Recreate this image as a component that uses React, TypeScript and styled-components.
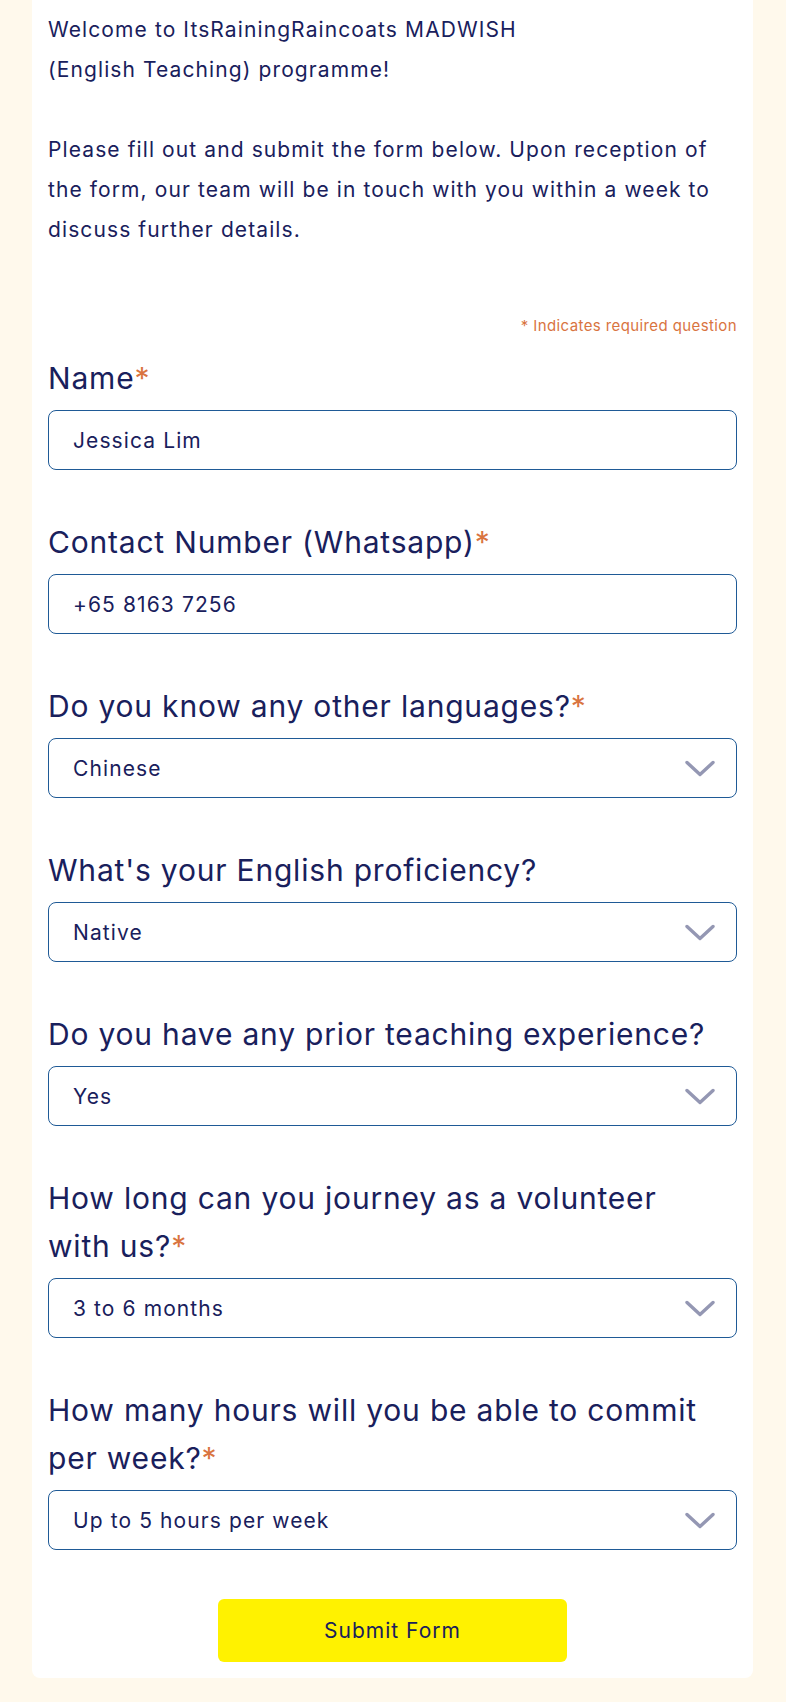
import React from "react";
import styled, { createGlobalStyle } from "styled-components";

const GlobalStyle = createGlobalStyle`
  body {
    margin: 0;
    background: #fff9ec;
    font-family: Inter, "Noto Sans", sans-serif;
    color: #19205c;
  }
`;

const Page = styled.div`
  padding: 0 33px 25px 32px;
`;

const Card = styled.form`
  background: #fff;
  border-radius: 0 0 8px 8px;
  padding: 10px 16px 16px;
  display: flex;
  flex-direction: column;
`;

const Intro = styled.p`
  margin: 0;
  font-size: 21px;
  letter-spacing: 1.1px;
  line-height: 40px;
`;

const RequiredNote = styled.div`
  margin-top: 66px;
  text-align: right;
  font-size: 15px;
  letter-spacing: 0.4px;
  line-height: 20px;
  color: #d9743f;
`;

const Field = styled.div<{ $first?: boolean }>`
  display: flex;
  flex-direction: column;
  gap: 8px;
  margin-top: ${(p) => (p.$first ? "18px" : "48px")};
`;

const Label = styled.label`
  font-size: 30px;
  letter-spacing: 0.8px;
  line-height: 48px;
  padding-right: 24px;
`;

const Star = styled.span`
  color: #d9743f;
`;

const Box = styled.div`
  box-sizing: border-box;
  height: 60px;
  border: 1px solid #1f5a96;
  border-radius: 8px;
  display: flex;
  align-items: center;
  justify-content: space-between;
  padding: 0 21px 0 24px;
  font-size: 21px;
  letter-spacing: 1.1px;
`;

const Chevron = styled.svg`
  width: 30px;
  height: 17px;
  color: #9497b3;
`;

const Submit = styled.button`
  align-self: center;
  margin-top: 49px;
  width: 349px;
  height: 63px;
  border: none;
  border-radius: 6px;
  background: #fff200;
  color: #19205c;
  font-family: inherit;
  font-size: 21px;
  letter-spacing: 1px;
`;

type Q = { label: string; value: string; required?: boolean; select?: boolean };

const questions: Q[] = [
  { label: "Name", value: "Jessica Lim", required: true },
  { label: "Contact Number (Whatsapp)", value: "+65 8163 7256", required: true },
  { label: "Do you know any other languages?", value: "Chinese", required: true, select: true },
  { label: "What's your English proficiency?", value: "Native", select: true },
  { label: "Do you have any prior teaching experience?", value: "Yes", select: true },
  { label: "How long can you journey as a volunteer with us?", value: "3 to 6 months", required: true, select: true },
  { label: "How many hours will you be able to commit per week?", value: "Up to 5 hours per week", required: true, select: true },
];

export default function App() {
  return (
    <>
      <GlobalStyle />
      <Page>
        <Card onSubmit={(e) => e.preventDefault()}>
          <Intro>
            Welcome to ItsRainingRaincoats MADWISH
            <br />
            (English Teaching) programme!
            <br />
            <br />
            Please fill out and submit the form below. Upon reception of the
            form, our team will be in touch with you within a week to discuss
            further details.
          </Intro>
          <RequiredNote>* Indicates required question</RequiredNote>
          {questions.map((q, i) => (
            <Field key={q.label} $first={i === 0}>
              <Label>
                {q.label}
                {q.required && <Star>*</Star>}
              </Label>
              <Box>
                <span>{q.value}</span>
                {q.select && (
                  <Chevron viewBox="0 0 30 17" fill="none">
                    <path
                      d="M2 2.5 L15 14.5 L28 2.5"
                      stroke="currentColor"
                      strokeWidth="3.4"
                      strokeLinecap="round"
                      strokeLinejoin="round"
                    />
                  </Chevron>
                )}
              </Box>
            </Field>
          ))}
          <Submit type="submit">Submit Form</Submit>
        </Card>
      </Page>
    </>
  );
}
